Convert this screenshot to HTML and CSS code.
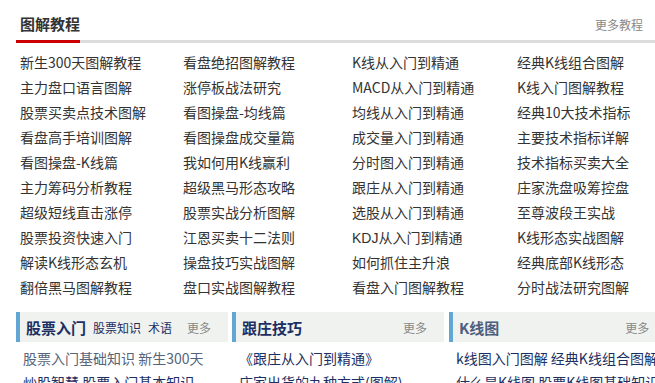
FILE: index.html
```html
<!DOCTYPE html>
<html lang="zh-CN">
<head>
    <meta charset="UTF-8">
    <title>图解教程</title>
    <link rel="stylesheet" href="styles.css">
</head>
<body>
    <div class="wrap">
        <div class="tit">
            <h2>图解教程</h2>
            <a class="more" href="#">更多教程</a>
        </div>
        <ul class="tut-list">
            <li>新生300天图解教程</li>
            <li>看盘绝招图解教程</li>
            <li>K线从入门到精通</li>
            <li>经典K线组合图解</li>
            <li>主力盘口语言图解</li>
            <li>涨停板战法研究</li>
            <li>MACD从入门到精通</li>
            <li>K线入门图解教程</li>
            <li>股票买卖点技术图解</li>
            <li>看图操盘-均线篇</li>
            <li>均线从入门到精通</li>
            <li>经典10大技术指标</li>
            <li>看盘高手培训图解</li>
            <li>看图操盘成交量篇</li>
            <li>成交量入门到精通</li>
            <li>主要技术指标详解</li>
            <li>看图操盘-K线篇</li>
            <li>我如何用K线赢利</li>
            <li>分时图入门到精通</li>
            <li>技术指标买卖大全</li>
            <li>主力筹码分析教程</li>
            <li>超级黑马形态攻略</li>
            <li>跟庄从入门到精通</li>
            <li>庄家洗盘吸筹控盘</li>
            <li>超级短线直击涨停</li>
            <li>股票实战分析图解</li>
            <li>选股从入门到精通</li>
            <li>至尊波段王实战</li>
            <li>股票投资快速入门</li>
            <li>江恩买卖十二法则</li>
            <li><span class="en">KDJ</span>从入门到精通</li>
            <li>K线形态实战图解</li>
            <li>解读K线形态玄机</li>
            <li>操盘技巧实战图解</li>
            <li>如何抓住主升浪</li>
            <li>经典底部K线形态</li>
            <li>翻倍黑马图解教程</li>
            <li>盘口实战图解教程</li>
            <li>看盘入门图解教程</li>
            <li>分时战法研究图解</li>
        </ul>
        <div class="boxes">
            <div class="box">
                <div class="box-hd">
                    <h3>股票入门</h3>
                    <a class="sub" href="#">股票知识</a>
                    <a class="sub" href="#">术语</a>
                    <a class="more" href="#">更多</a>
                </div>
                <p class="line gray">股票入门基础知识 新生300天</p>
                <p class="line">炒股智慧 股票入门基本知识</p>
            </div>
            <div class="box">
                <div class="box-hd">
                    <h3>跟庄技巧</h3>
                    <a class="more" href="#">更多</a>
                </div>
                <p class="line">《跟庄从入门到精通》</p>
                <p class="line">庄家出货的九种方式(图解)</p>
            </div>
            <div class="box last">
                <div class="box-hd">
                    <h3 class="dim">K线图</h3>
                    <a class="more" href="#">更多</a>
                </div>
                <p class="line">k线图入门图解 经典K线组合图解</p>
                <p class="line">什么是K线图 股票K线图基础知识</p>
            </div>
        </div>
    </div>
</body>
</html>
```

FILE: styles.css
```css
body {
    margin: 0;
    background: #fff;
    font-family: "Noto Sans CJK SC", "Liberation Sans", sans-serif;
    color: #333;
    overflow: hidden;
}
a {
    text-decoration: none;
}
.wrap {
    padding-left: 16px;
}
.tit {
    display: flex;
    justify-content: space-between;
    align-items: center;
    height: 32px;
    padding: 8px 12px 0 0;
    border-bottom: 3px solid #dcdcdc;
    position: relative;
}
.tit h2 {
    margin: 0 0 0 4px;
    font-size: 15px;
    font-weight: bold;
    color: #333;
    line-height: 20px;
}
.tit::after {
    content: "";
    position: absolute;
    left: 0;
    bottom: -3px;
    width: 64px;
    height: 3px;
    background: #c00;
}
.tit .more {
    font-size: 12px;
    color: #888;
}
.tut-list {
    list-style: none;
    margin: 7px 0 0;
    padding: 0 0 0 4px;
    display: grid;
    grid-template-columns: 163px 169px 165px 1fr;
}
.tut-list li {
    font-size: 14px;
    line-height: 25px;
    height: 25px;
    white-space: nowrap;
    color: #333;
}
.tut-list .en {
    font-family: "Liberation Sans", sans-serif;
}
.boxes {
    display: flex;
    gap: 4px;
    margin-top: 12px;
}
.box {
    width: 212px;
    flex: none;
}
.box.last {
    flex: 1;
    margin-left: 1px;
}
.box-hd {
    display: flex;
    align-items: center;
    height: 30px;
    background: #f0f2f0;
    border-left: 4px solid #62a6d3;
    padding: 0 0 0 6px;
}
.box-hd h3 {
    margin: 0;
    font-size: 15px;
    font-weight: bold;
    color: #1b2f62;
}
.box-hd h3.dim {
    color: #4d5f7f;
}
.box-hd .sub {
    font-size: 12px;
    color: #1b2f62;
    margin-left: 7px;
}
.box-hd .more {
    font-size: 12px;
    color: #888;
    margin-left: auto;
    margin-right: 17px;
}
.box.last .box-hd .more {
    margin-right: 10px;
}
.line {
    margin: 0;
    padding-left: 7px;
    font-size: 14px;
    line-height: 24px;
    color: #1b2f62;
    white-space: nowrap;
}
.line:first-of-type {
    margin-top: 4px;
}
.line.gray {
    color: #56647a;
}
```
